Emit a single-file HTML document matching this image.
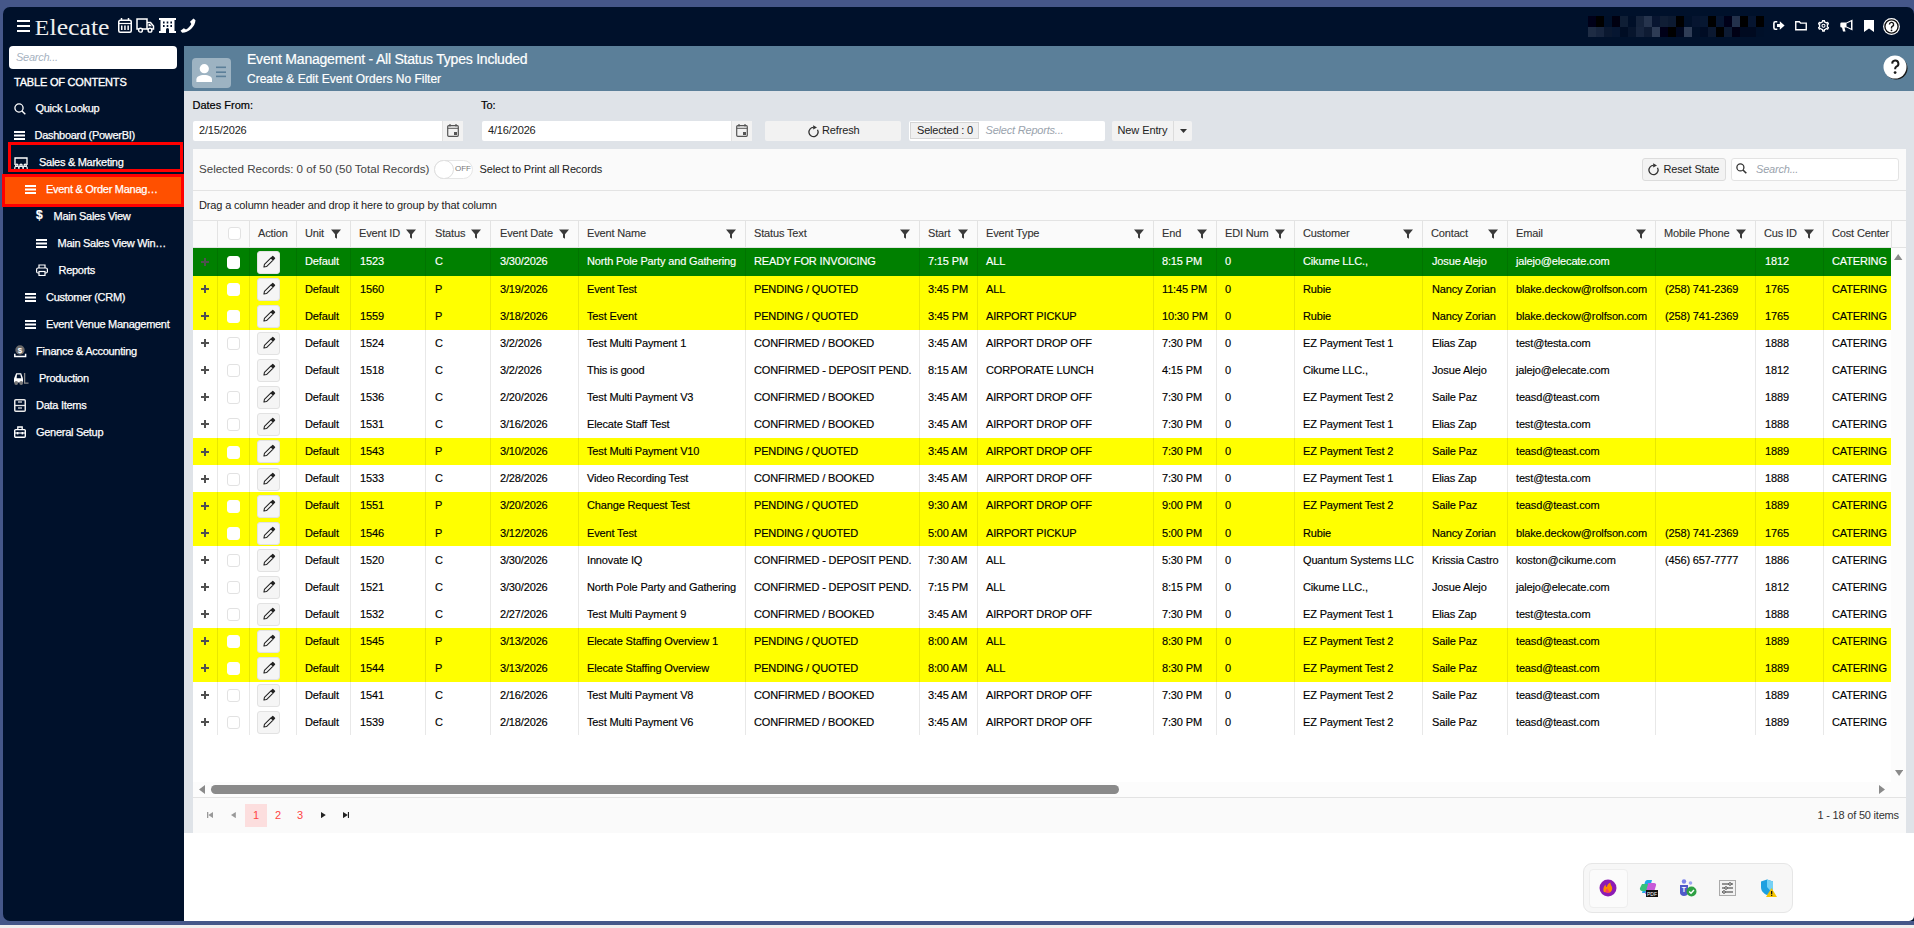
<!DOCTYPE html>
<html><head><meta charset="utf-8">
<style>
*{box-sizing:border-box;margin:0;padding:0}
html,body{width:1914px;height:928px;overflow:hidden;background:#efefef;font-family:"Liberation Sans",sans-serif;font-size:11px;color:#222}
.abs{position:absolute}
#frame{position:absolute;left:0;top:0;width:1914px;height:925px;background:#455789}
#navy{position:absolute;left:3px;top:7px;width:1911px;height:914px;background:#00112b;border-radius:7px 7px 0 7px}
#content{position:absolute;left:184px;top:46px;width:1730px;height:875px;background:#fff;border-bottom-right-radius:5px;overflow:hidden}
#band{position:absolute;left:0;top:0;width:1730px;height:45px;background:#5b7f99}
#gray{position:absolute;left:0;top:45px;width:1730px;height:742px;background:#dfe3e8}
.logo{position:absolute;left:35px;top:11px;font-family:"Liberation Serif",serif;font-size:26px;color:#f2f2f2;letter-spacing:-0.6px;line-height:30px}
.ham{position:absolute;left:16.5px;width:13.5px;height:2.3px;background:#fff}
.pix{position:absolute;left:1588px;top:16px;width:176px;height:21px}
.pix i{position:absolute;width:8px;height:10.5px;display:block}
.side-search{position:absolute;left:9px;top:46px;width:168px;height:23px;background:#fff;border-radius:4px}
.side-search span{position:absolute;left:7px;top:5px;font-style:italic;color:#a6b2bf;font-size:11px;letter-spacing:-0.25px}
.toc{position:absolute;left:14px;top:75px;color:#fff;font-size:11px;letter-spacing:-0.2px;line-height:14px;-webkit-text-stroke:0.35px #fff}
.nav{position:absolute;color:#fff;font-size:11px;letter-spacing:-0.28px;line-height:14px;white-space:nowrap;-webkit-text-stroke:0.25px #fff}
.nico{position:absolute}
.redbox{position:absolute;border:3px solid #f00}
.lbl{position:absolute;font-size:11px;color:#222;line-height:14px}
.inp{position:absolute;background:#fff;border-radius:2px;height:20px}
.inp .v{position:absolute;left:6px;top:2px;font-size:11px;color:#222;line-height:14px;letter-spacing:-0.15px}
.inp .cal{position:absolute;right:0;top:0;width:21px;height:20px;background:#f2f2f2;border-left:1px solid #e2e2e2}
.btn{position:absolute;background:#f2f2f2;border-radius:2px;height:20px}
#grid{position:absolute;left:193px;top:149px;width:1713px;height:684px;background:#fafafa;overflow:hidden}
.gtool-line{position:absolute;left:193px;width:1713px;height:1px;background:#e3e3e3}
.ghead{position:absolute;left:193px;width:1713px;height:26px;background:#fafafa}
.hc{position:absolute;top:0;height:26px;line-height:25px;padding-left:8px;color:#333;-webkit-text-stroke:0.12px #333;white-space:nowrap;overflow:hidden;letter-spacing:-0.15px}
.bl{border-left:1px solid rgba(0,0,0,0.09)}
.vl{position:absolute;top:248px;width:1px;height:488px;background:rgba(0,0,0,0.09)}
.hc .fi{position:absolute;right:9px;top:8px}
.row{position:absolute;left:193px;width:1698px;height:27px}
.rg{background:#008000;color:#fff}
.ry{background:#ffff00;color:#000}
.rw{background:#fff;color:#000}
.c{position:absolute;top:0;height:27px;line-height:29px;padding-left:9px;-webkit-text-stroke:0.15px currentColor;white-space:nowrap;overflow:hidden;letter-spacing:-0.15px}
.plus{position:absolute;left:8px;top:10px;width:8px;height:8px}
.plus:before{content:"";position:absolute;left:0;top:3px;width:8px;height:2px;background:#505050}
.plus:after{content:"";position:absolute;left:3px;top:0;width:2px;height:8px;background:#505050}
.cb{position:absolute;left:10px;top:7px;width:13px;height:13px;background:#fff;border:1px solid #e2e2e2;border-radius:3px}
.rg .cb,.ry .cb{border-color:#fff}
.hcb{top:6px}
.eb{position:absolute;left:8px;top:3px;width:23px;height:22.5px;background:#f5f5f5;border:1px solid #e2e2e2;border-radius:3px}
.eb svg{position:absolute;left:4px;top:3px}
</style></head>
<body>
<div id="frame"></div>
<div id="navy"></div>

<!-- top header -->
<div class="ham" style="top:20px"></div>
<div class="ham" style="top:25px"></div>
<div class="ham" style="top:29.5px"></div>
<svg class="abs" style="left:30px;top:12px" width="90" height="28" viewBox="0 0 90 28"><text x="4.8" y="22.6" font-family="Liberation Serif" font-size="21.5" fill="#eeeeee" textLength="14.5" lengthAdjust="spacingAndGlyphs">E</text><g transform="translate(0,22.6) scale(1,1.12) translate(0,-22.6)"><text x="19.5" y="22.6" font-family="Liberation Serif" font-size="21" fill="#eeeeee" textLength="60" lengthAdjust="spacingAndGlyphs">lecate</text></g></svg>
<!-- header icons -->
<svg class="abs" style="left:118px;top:18px" width="14" height="15" viewBox="0 0 14 15"><rect x="0.75" y="2.25" width="12.5" height="12" rx="1.5" fill="none" stroke="#fff" stroke-width="1.5"/><line x1="0.75" y1="5.5" x2="13.25" y2="5.5" stroke="#fff" stroke-width="1.2"/><line x1="3.5" y1="0" x2="3.5" y2="3" stroke="#fff" stroke-width="1.5"/><line x1="10.5" y1="0" x2="10.5" y2="3" stroke="#fff" stroke-width="1.5"/><g fill="#fff"><rect x="3" y="7.5" width="1.5" height="4.5"/><rect x="6.2" y="7.5" width="1.5" height="4.5"/><rect x="9.4" y="7.5" width="1.5" height="4.5"/></g></svg>
<svg class="abs" style="left:136px;top:18px" width="19" height="15" viewBox="0 0 19 15"><path d="M1 1H11V11H1Z" fill="none" stroke="#fff" stroke-width="1.5"/><path d="M11 4.5H14.5L17.5 8V11H11" fill="none" stroke="#fff" stroke-width="1.5"/><path d="M12.5 6H14L16 8.2H12.5Z" fill="#fff"/><circle cx="4.5" cy="12.2" r="1.9" fill="#00112b" stroke="#fff" stroke-width="1.4"/><circle cx="14" cy="12.2" r="1.9" fill="#00112b" stroke="#fff" stroke-width="1.4"/></svg>
<svg class="abs" style="left:159px;top:18px" width="17" height="15" viewBox="0 0 17 15"><path d="M0 0H17V2H15.5V13H17V15H10V11.5A1.5 1.5 0 0 0 7 11.5V15H0V13H1.5V2H0Z" fill="#fff"/><g fill="#00112b"><rect x="4" y="3.5" width="1.6" height="2"/><rect x="7.7" y="3.5" width="1.6" height="2"/><rect x="11.4" y="3.5" width="1.6" height="2"/><rect x="4" y="7" width="1.6" height="2"/><rect x="7.7" y="7" width="1.6" height="2"/><rect x="11.4" y="7" width="1.6" height="2"/></g></svg>
<svg class="abs" style="left:180px;top:18px" width="16" height="15" viewBox="0 0 16 15"><path d="M13.5 0.5L15.5 2.2C15.2 8.5 8.5 14.8 2.2 14.8L0.5 12.8L3.8 10.2L6 11.5C8.2 10.3 10.3 8.2 11.3 6L10 3.8Z" fill="#fff"/></svg>

<!-- pixelated user name -->
<div class="pix"><i style="left:0px;top:0;background:#000018"></i><i style="left:8px;top:0;background:#000000"></i><i style="left:16px;top:0;background:#001029"></i><i style="left:24px;top:0;background:#000010"></i><i style="left:32px;top:0;background:#0f1e35"></i><i style="left:40px;top:0;background:#000f28"></i><i style="left:48px;top:0;background:#15233b"></i><i style="left:56px;top:0;background:#26344d"></i><i style="left:64px;top:0;background:#081530"></i><i style="left:72px;top:0;background:#101e35"></i><i style="left:80px;top:0;background:#0c1a31"></i><i style="left:88px;top:0;background:#000000"></i><i style="left:96px;top:0;background:#001029"></i><i style="left:104px;top:0;background:#061530"></i><i style="left:112px;top:0;background:#071731"></i><i style="left:120px;top:0;background:#000000"></i><i style="left:128px;top:0;background:#061530"></i><i style="left:136px;top:0;background:#000018"></i><i style="left:144px;top:0;background:#23314b"></i><i style="left:152px;top:0;background:#000000"></i><i style="left:160px;top:0;background:#061530"></i><i style="left:168px;top:0;background:#000000"></i><i style="left:0px;top:10.5px;background:#1e2c44"></i><i style="left:8px;top:10.5px;background:#17253e"></i><i style="left:16px;top:10.5px;background:#0a1830"></i><i style="left:24px;top:10.5px;background:#061631"></i><i style="left:32px;top:10.5px;background:#000d24"></i><i style="left:40px;top:10.5px;background:#07152d"></i><i style="left:48px;top:10.5px;background:#17253e"></i><i style="left:56px;top:10.5px;background:#0e1b33"></i><i style="left:64px;top:10.5px;background:#2e3c55"></i><i style="left:72px;top:10.5px;background:#000018"></i><i style="left:80px;top:10.5px;background:#000000"></i><i style="left:88px;top:10.5px;background:#00081f"></i><i style="left:96px;top:10.5px;background:#2f3d56"></i><i style="left:104px;top:10.5px;background:#001029"></i><i style="left:112px;top:10.5px;background:#000c24"></i><i style="left:120px;top:10.5px;background:#0b1830"></i><i style="left:128px;top:10.5px;background:#000000"></i><i style="left:136px;top:10.5px;background:#0c1a32"></i><i style="left:144px;top:10.5px;background:#000014"></i><i style="left:152px;top:10.5px;background:#000a20"></i><i style="left:160px;top:10.5px;background:#000a20"></i><i style="left:168px;top:10.5px;background:#001029"></i></div>

<!-- right header icons -->
<svg class="abs" style="left:1772.5px;top:21px" width="12" height="9" viewBox="0 0 12 9"><path d="M4.3 0.8H2.3A1.4 1.4 0 0 0 0.9 2.2V6.8A1.4 1.4 0 0 0 2.3 8.2H4.3" fill="none" stroke="#fff" stroke-width="1.6"/><path d="M4 2.9H6.8V0.2L11.6 4.5L6.8 8.8V6.1H4Z" fill="#fff"/></svg>
<svg class="abs" style="left:1795px;top:21px" width="12" height="9.5" viewBox="0 0 12 9.5"><path d="M0.75 0.75H4.3L5.6 2.1H11.25V8.75H0.75Z" fill="none" stroke="#fff" stroke-width="1.4"/></svg>
<svg class="abs" style="left:1818px;top:20px" width="11" height="12" viewBox="0 0 11 12"><path d="M3.68 2.19L4.63 1.85L4.63 0.52L6.37 0.52L6.37 1.85L7.67 2.39L8.44 3.04L9.59 2.38L10.46 3.89L9.32 4.55L9.50 5.95L9.32 6.95L10.46 7.61L9.59 9.12L8.44 8.46L7.32 9.31L6.37 9.65L6.37 10.98L4.63 10.98L4.63 9.65L3.33 9.11L2.56 8.46L1.41 9.12L0.54 7.61L1.68 6.95L1.50 5.55L1.68 4.55L0.54 3.89L1.41 2.38L2.56 3.04Z" fill="none" stroke="#fff" stroke-width="1.3" stroke-linejoin="round"/><circle cx="5.5" cy="5.75" r="1.5" fill="none" stroke="#fff" stroke-width="1.1"/></svg>
<svg class="abs" style="left:1840px;top:19px" width="14" height="13" viewBox="0 0 14 13"><path d="M12.5 0.5V11.5L6.5 8.5H4.5L5.5 12.5H3L2 8.5H1.5A1.2 1.2 0 0 1 0.3 7.3V4.7A1.2 1.2 0 0 1 1.5 3.5H6.5Z" fill="#fff"/><path d="M6.5 4.5L11 2.5V9.5L6.5 7.5Z" fill="#00112b"/></svg>
<svg class="abs" style="left:1864px;top:20px" width="10" height="12" viewBox="0 0 10 12"><path d="M0 0H10V12L5 8.6L0 12Z" fill="#fff"/></svg>
<svg class="abs" style="left:1883px;top:17.5px" width="17" height="17" viewBox="0 0 17 17"><circle cx="8.5" cy="8.5" r="8.4" fill="#fff"/><circle cx="8.5" cy="8.5" r="6.6" fill="none" stroke="#111" stroke-width="1.4"/><path d="M6.4 6.5A2.1 2.1 0 1 1 9.3 8.4C8.8 8.7 8.5 9.1 8.5 9.8V10.4" fill="none" stroke="#111" stroke-width="1.4"/><circle cx="8.5" cy="12.3" r="0.9" fill="#111"/></svg>

<!-- sidebar -->
<div class="side-search"><span>Search...</span></div>
<div class="toc">TABLE OF CONTENTS</div>

<svg class="abs" style="left:14px;top:103px" width="12" height="12" viewBox="0 0 12 12"><circle cx="5" cy="5" r="4.1" fill="none" stroke="#fff" stroke-width="1.3"/><line x1="8" y1="8" x2="11.3" y2="11.3" stroke="#fff" stroke-width="1.4"/></svg>
<div class="nav" style="left:35.5px;top:101px">Quick Lookup</div>

<svg class="abs" style="left:14px;top:131px" width="11" height="9" viewBox="0 0 11 9"><rect y="0" width="11" height="2" fill="#fff"/><rect y="3.5" width="11" height="2" fill="#fff"/><rect y="7" width="11" height="2" fill="#fff"/></svg>
<div class="nav" style="left:34.5px;top:128px">Dashboard (PowerBI)</div>

<div class="redbox" style="left:8px;top:142px;width:175px;height:30px"></div>
<svg class="abs" style="left:14px;top:157px" width="14" height="12" viewBox="0 0 14 12"><path d="M1 8V1H13V8" fill="none" stroke="#fff" stroke-width="1.3"/><g fill="none" stroke="#fff" stroke-width="1.1"><circle cx="2.8" cy="8.3" r="1.2"/><circle cx="7" cy="8.3" r="1.2"/><circle cx="11.2" cy="8.3" r="1.2"/><path d="M0.8 12V11A2 2 0 0 1 4.8 11V12M5 12V11A2 2 0 0 1 9 11V12M9.2 12V11A2 2 0 0 1 13.2 11V12"/></g></svg>
<div class="nav" style="left:39px;top:155px">Sales &amp; Marketing</div>

<div class="redbox" style="left:2px;top:174px;width:182px;height:33px;background:#ff5000"></div>
<svg class="abs" style="left:25px;top:185px" width="11" height="9" viewBox="0 0 11 9"><rect y="0" width="11" height="2" fill="#fff"/><rect y="3.5" width="11" height="2" fill="#fff"/><rect y="7" width="11" height="2" fill="#fff"/></svg>
<div class="nav" style="left:46px;top:182px">Event &amp; Order Manag…</div>

<div class="nav" style="left:36px;top:208px;font-weight:bold;font-size:12px">$</div>
<div class="nav" style="left:53.5px;top:209px">Main Sales View</div>

<svg class="abs" style="left:36px;top:239px" width="11" height="9" viewBox="0 0 11 9"><rect y="0" width="11" height="2" fill="#fff"/><rect y="3.5" width="11" height="2" fill="#fff"/><rect y="7" width="11" height="2" fill="#fff"/></svg>
<div class="nav" style="left:57.5px;top:236px">Main Sales View Win…</div>

<svg class="abs" style="left:36px;top:264px" width="12" height="12" viewBox="0 0 12 12"><path d="M3 4V1H9V4" fill="none" stroke="#fff" stroke-width="1.2"/><rect x="0.6" y="4" width="10.8" height="5" rx="1.5" fill="none" stroke="#fff" stroke-width="1.2"/><rect x="3" y="7.5" width="6" height="4" fill="#00112b" stroke="#fff" stroke-width="1.2"/></svg>
<div class="nav" style="left:58.5px;top:263px">Reports</div>

<svg class="abs" style="left:25px;top:293px" width="11" height="9" viewBox="0 0 11 9"><rect y="0" width="11" height="2" fill="#fff"/><rect y="3.5" width="11" height="2" fill="#fff"/><rect y="7" width="11" height="2" fill="#fff"/></svg>
<div class="nav" style="left:46px;top:290px">Customer (CRM)</div>

<svg class="abs" style="left:25px;top:320px" width="11" height="9" viewBox="0 0 11 9"><rect y="0" width="11" height="2" fill="#fff"/><rect y="3.5" width="11" height="2" fill="#fff"/><rect y="7" width="11" height="2" fill="#fff"/></svg>
<div class="nav" style="left:46px;top:317px">Event Venue Management</div>

<svg class="abs" style="left:14px;top:345px" width="13" height="13" viewBox="0 0 13 13"><circle cx="6" cy="5" r="4.7" fill="#6a6a6a"/><text x="6" y="8" font-size="8" font-weight="bold" fill="#fff" text-anchor="middle" font-family="Liberation Sans">$</text><path d="M0.8 8.8V11.6H11.6V8.8" fill="none" stroke="#fff" stroke-width="1.5"/></svg>
<div class="nav" style="left:36px;top:344px">Finance &amp; Accounting</div>

<svg class="abs" style="left:13px;top:372px" width="16" height="13" viewBox="0 0 16 13"><path d="M1 6.5L3.2 1.2H8.2L10 6.5V10.5H1Z" fill="#fff"/><path d="M4 2.6H7.3L8.3 6.2H3.6Z" fill="#00112b"/><circle cx="3.2" cy="11" r="1.9" fill="#7a7a7a"/><circle cx="8.2" cy="11" r="1.9" fill="#7a7a7a"/><path d="M11.6 1V11.2H15.5" fill="none" stroke="#8a8a8a" stroke-width="1.3"/></svg>
<div class="nav" style="left:39px;top:371px">Production</div>

<svg class="abs" style="left:14px;top:399px" width="12" height="13" viewBox="0 0 12 13"><rect x="0.75" y="0.75" width="10.5" height="11.5" rx="1" fill="none" stroke="#e8e8e8" stroke-width="1.5"/><line x1="0.75" y1="6.5" x2="11.25" y2="6.5" stroke="#e8e8e8" stroke-width="1.3"/><line x1="4" y1="3" x2="8" y2="3" stroke="#e8e8e8" stroke-width="1.2"/><line x1="4" y1="9" x2="8" y2="9" stroke="#e8e8e8" stroke-width="1.2"/></svg>
<div class="nav" style="left:36px;top:398px">Data Items</div>

<svg class="abs" style="left:14px;top:426px" width="12" height="12" viewBox="0 0 12 12"><path d="M3.8 3.5V1H8.2V3.5" fill="none" stroke="#fff" stroke-width="1.3"/><rect x="0.7" y="3.6" width="10.6" height="7.6" rx="1" fill="none" stroke="#fff" stroke-width="1.4"/><line x1="0.7" y1="7" x2="11.3" y2="7" stroke="#fff" stroke-width="1.2"/><rect x="2.8" y="6" width="1.6" height="2.4" fill="#fff"/><rect x="7.6" y="6" width="1.6" height="2.4" fill="#fff"/></svg>
<div class="nav" style="left:36px;top:425px">General Setup</div>

<!-- content -->
<div id="content">
  <div id="band"></div>
  <div id="gray"></div>
</div>

<!-- band contents -->
<svg class="abs" style="left:192px;top:58px" width="39" height="30" viewBox="0 0 39 30"><rect x="0" y="0" width="39" height="30" rx="4" fill="#9db3c2"/><circle cx="12.3" cy="10.7" r="4.6" fill="#fff"/><path d="M4.4 24V21.6C4.4 18.6 7.6 17 12.2 17C16.8 17 20 18.6 20 21.6V24Z" fill="#fff"/><g stroke="#5b7f99" stroke-width="1.6"><line x1="24" y1="9.3" x2="34" y2="9.3"/><line x1="24" y1="14.2" x2="34" y2="14.2"/><line x1="24" y1="18.4" x2="34" y2="18.4"/></g></svg>
<div class="abs" style="left:247px;top:51px;font-size:14px;color:#fff;line-height:16px;letter-spacing:-0.22px;white-space:nowrap;-webkit-text-stroke:0.2px #fff">Event Management - All Status Types Included</div>
<div class="abs" style="left:247px;top:72px;font-size:12px;color:#fff;line-height:14px;white-space:nowrap;-webkit-text-stroke:0.2px #fff">Create &amp; Edit Event Orders No Filter</div>
<svg class="abs" style="left:1883px;top:55px;overflow:visible" width="24" height="24" viewBox="0 0 24 24"><circle cx="13.2" cy="13.2" r="11.3" fill="#1a1a1a"/><circle cx="12" cy="12" r="11.5" fill="#fff"/><path d="M9.2 8.6A3.1 3.1 0 1 1 13.4 11.6C12.6 12.1 12.2 12.6 12.2 13.5V14.2" fill="none" stroke="#1a1a1a" stroke-width="2"/><circle cx="12.1" cy="17.6" r="1.4" fill="#1a1a1a"/></svg>

<!-- toolbar -->
<div class="lbl" style="left:192.5px;top:98px;letter-spacing:0px;color:#000;-webkit-text-stroke:0.2px #000">Dates From:</div>
<div class="lbl" style="left:481px;top:98px;color:#000;-webkit-text-stroke:0.2px #000">To:</div>
<div class="inp" style="left:193px;top:121px;width:270px"><span class="v">2/15/2026</span><span class="cal"></span></div>
<div class="inp" style="left:482px;top:121px;width:270px"><span class="v">4/16/2026</span><span class="cal"></span></div>
<svg class="abs" style="left:447px;top:124px" width="12" height="13" viewBox="0 0 12 13"><rect x="0.7" y="1.7" width="10.6" height="10.6" rx="1" fill="none" stroke="#555" stroke-width="1.2"/><line x1="0.7" y1="4.3" x2="11.3" y2="4.3" stroke="#555" stroke-width="1"/><line x1="3" y1="0" x2="3" y2="2.5" stroke="#555" stroke-width="1.2"/><line x1="9" y1="0" x2="9" y2="2.5" stroke="#555" stroke-width="1.2"/><rect x="7" y="8" width="3" height="3" fill="#555"/></svg>
<svg class="abs" style="left:736px;top:124px" width="12" height="13" viewBox="0 0 12 13"><rect x="0.7" y="1.7" width="10.6" height="10.6" rx="1" fill="none" stroke="#555" stroke-width="1.2"/><line x1="0.7" y1="4.3" x2="11.3" y2="4.3" stroke="#555" stroke-width="1"/><line x1="3" y1="0" x2="3" y2="2.5" stroke="#555" stroke-width="1.2"/><line x1="9" y1="0" x2="9" y2="2.5" stroke="#555" stroke-width="1.2"/><rect x="7" y="8" width="3" height="3" fill="#555"/></svg>

<div class="btn" style="left:765px;top:121px;width:136px"></div>
<svg class="abs" style="left:806.5px;top:124.5px;overflow:visible" width="13" height="13" viewBox="0 0 13 13"><path d="M6.5 2.4A4.6 4.6 0 1 0 10.5 4.7" fill="none" stroke="#333" stroke-width="1.3"/><path d="M6.2 0.2L10 2.4L6.2 4.6Z" fill="#333"/></svg>
<div class="lbl" style="left:822px;top:123px;color:#222;letter-spacing:-0.15px">Refresh</div>

<div class="abs" style="left:909px;top:121px;width:196px;height:20px;background:#fff;border-radius:2px"></div>
<div class="abs" style="left:910px;top:122px;width:69px;height:17px;background:#f0f0f0;border:1px solid #d5d5d5"></div>
<div class="lbl" style="left:917px;top:123px;letter-spacing:-0.18px">Selected : 0</div>
<div class="lbl" style="left:985.5px;top:123px;color:#9aa3ad;font-style:italic;letter-spacing:-0.2px">Select Reports...</div>

<div class="btn" style="left:1112px;top:121px;width:80px"></div>
<div class="abs" style="left:1173px;top:121px;width:1px;height:20px;background:#dcdcdc"></div>
<div class="lbl" style="left:1117.5px;top:123px;letter-spacing:-0.1px">New Entry</div>
<svg class="abs" style="left:1179.5px;top:128.5px" width="7" height="4" viewBox="0 0 7 4"><path d="M0 0H7L3.5 4Z" fill="#333"/></svg>

<!-- grid -->
<div id="grid"></div>
<div class="abs" style="left:193px;top:248px;width:1698px;height:534px;background:#fff"></div>
<div class="gtool-line" style="top:190px"></div>
<div class="gtool-line" style="top:220px"></div>
<div class="gtool-line" style="top:247px"></div>
<div class="gtool-line" style="top:797px"></div>

<div class="abs" style="left:199px;top:162px;font-size:11.6px;color:#444;line-height:14px;white-space:nowrap;letter-spacing:-0.02px">Selected Records: 0 of 50 (50 Total Records)</div>
<div class="abs" style="left:434px;top:160px;width:39px;height:19px;border-radius:10px;background:#fff;border:1px solid #e6e6e6"></div>
<div class="abs" style="left:434px;top:159.5px;width:19.5px;height:19.5px;border-radius:50%;background:#fff;border:1px solid #dedede"></div>
<div class="abs" style="left:455px;top:164px;font-size:8px;color:#777;line-height:10px">OFF</div>
<div class="lbl" style="left:479.5px;top:162px;color:#222;letter-spacing:-0.15px">Select to Print all Records</div>

<div class="abs" style="left:1642px;top:158px;width:83.5px;height:23px;background:#f3f3f3;border:1px solid #dcdcdc;border-radius:3px"></div>
<svg class="abs" style="left:1647.4px;top:162.6px;overflow:visible" width="13" height="13" viewBox="0 0 13 13"><path d="M6.5 2.4A4.6 4.6 0 1 0 10.5 4.7" fill="none" stroke="#333" stroke-width="1.3"/><path d="M6.2 0.2L10 2.4L6.2 4.6Z" fill="#333"/></svg>
<div class="lbl" style="left:1663.5px;top:162px;color:#222;letter-spacing:-0.15px">Reset State</div>
<div class="abs" style="left:1731px;top:158px;width:168px;height:23px;background:#fff;border:1px solid #e3e3e3;border-radius:3px"></div>
<svg class="abs" style="left:1735.5px;top:163px" width="11" height="11" viewBox="0 0 11 11"><circle cx="4.4" cy="4.4" r="3.5" fill="none" stroke="#333" stroke-width="1.3"/><line x1="7" y1="7" x2="10.3" y2="10.3" stroke="#333" stroke-width="1.6"/></svg>
<div class="lbl" style="left:1756px;top:162px;color:#9aa3ad;font-style:italic;letter-spacing:-0.2px">Search...</div>

<div class="lbl" style="left:199px;top:198px;color:#222;letter-spacing:-0.15px">Drag a column header and drop it here to group by that column</div>

<div class="ghead" style="top:221px">
<div class="hc" style="left:0px;width:24px"></div>
<div class="hc bl" style="left:24px;width:32px"><span class="cb hcb"></span></div>
<div class="hc bl" style="left:56px;width:47px"><span class="ht">Action</span></div>
<div class="hc bl" style="left:103px;width:54px"><span class="ht">Unit</span><svg class="fi" width="10" height="10" viewBox="0 0 10 10"><path d="M0 0.5H10L6 5.2V9.8L4 8.6V5.2Z" fill="#3a3a3a"/></svg></div>
<div class="hc bl" style="left:157px;width:75px"><span class="ht">Event ID</span><svg class="fi" width="10" height="10" viewBox="0 0 10 10"><path d="M0 0.5H10L6 5.2V9.8L4 8.6V5.2Z" fill="#3a3a3a"/></svg></div>
<div class="hc bl" style="left:232px;width:65px;padding-left:9px"><span class="ht">Status</span><svg class="fi" width="10" height="10" viewBox="0 0 10 10"><path d="M0 0.5H10L6 5.2V9.8L4 8.6V5.2Z" fill="#3a3a3a"/></svg></div>
<div class="hc bl" style="left:297px;width:88px;padding-left:9px"><span class="ht">Event Date</span><svg class="fi" width="10" height="10" viewBox="0 0 10 10"><path d="M0 0.5H10L6 5.2V9.8L4 8.6V5.2Z" fill="#3a3a3a"/></svg></div>
<div class="hc bl" style="left:385px;width:167px"><span class="ht">Event Name</span><svg class="fi" width="10" height="10" viewBox="0 0 10 10"><path d="M0 0.5H10L6 5.2V9.8L4 8.6V5.2Z" fill="#3a3a3a"/></svg></div>
<div class="hc bl" style="left:552px;width:174px"><span class="ht">Status Text</span><svg class="fi" width="10" height="10" viewBox="0 0 10 10"><path d="M0 0.5H10L6 5.2V9.8L4 8.6V5.2Z" fill="#3a3a3a"/></svg></div>
<div class="hc bl" style="left:726px;width:58px"><span class="ht">Start</span><svg class="fi" width="10" height="10" viewBox="0 0 10 10"><path d="M0 0.5H10L6 5.2V9.8L4 8.6V5.2Z" fill="#3a3a3a"/></svg></div>
<div class="hc bl" style="left:784px;width:176px"><span class="ht">Event Type</span><svg class="fi" width="10" height="10" viewBox="0 0 10 10"><path d="M0 0.5H10L6 5.2V9.8L4 8.6V5.2Z" fill="#3a3a3a"/></svg></div>
<div class="hc bl" style="left:960px;width:63px"><span class="ht">End</span><svg class="fi" width="10" height="10" viewBox="0 0 10 10"><path d="M0 0.5H10L6 5.2V9.8L4 8.6V5.2Z" fill="#3a3a3a"/></svg></div>
<div class="hc bl" style="left:1023px;width:78px"><span class="ht">EDI Num</span><svg class="fi" width="10" height="10" viewBox="0 0 10 10"><path d="M0 0.5H10L6 5.2V9.8L4 8.6V5.2Z" fill="#3a3a3a"/></svg></div>
<div class="hc bl" style="left:1101px;width:128px"><span class="ht">Customer</span><svg class="fi" width="10" height="10" viewBox="0 0 10 10"><path d="M0 0.5H10L6 5.2V9.8L4 8.6V5.2Z" fill="#3a3a3a"/></svg></div>
<div class="hc bl" style="left:1229px;width:85px"><span class="ht">Contact</span><svg class="fi" width="10" height="10" viewBox="0 0 10 10"><path d="M0 0.5H10L6 5.2V9.8L4 8.6V5.2Z" fill="#3a3a3a"/></svg></div>
<div class="hc bl" style="left:1314px;width:148px"><span class="ht">Email</span><svg class="fi" width="10" height="10" viewBox="0 0 10 10"><path d="M0 0.5H10L6 5.2V9.8L4 8.6V5.2Z" fill="#3a3a3a"/></svg></div>
<div class="hc bl" style="left:1462px;width:100px"><span class="ht">Mobile Phone</span><svg class="fi" width="10" height="10" viewBox="0 0 10 10"><path d="M0 0.5H10L6 5.2V9.8L4 8.6V5.2Z" fill="#3a3a3a"/></svg></div>
<div class="hc bl" style="left:1562px;width:68px"><span class="ht">Cus ID</span><svg class="fi" width="10" height="10" viewBox="0 0 10 10"><path d="M0 0.5H10L6 5.2V9.8L4 8.6V5.2Z" fill="#3a3a3a"/></svg></div>
<div class="hc bl" style="left:1630px;width:68px"><span class="ht">Cost Center</span></div>
<div class="hc bl" style="left:1698px;width:15px"></div>
</div>
<div class="row rg" style="top:248px;height:28px">
<div class="c" style="left:0px;width:24px"><span class="plus" style="top:10px"></span></div>
<div class="c" style="left:24px;width:32px"><span class="cb" style="top:8px"></span></div>
<div class="c" style="left:56px;width:47px"><span class="eb" style="top:3px"><svg width="14" height="14" viewBox="0 0 14 14"><g transform="translate(7,7) rotate(-45)"><path d="M-7.2 0L-5 -1.5H4.3V1.5H-5Z" fill="none" stroke="#222" stroke-width="1.05" stroke-linejoin="round"/><rect x="4.3" y="-1.9" width="2.9" height="3.8" rx="0.6" fill="#222"/></g></svg></span></div>
<div class="c" style="left:103px;width:54px;top:-1px">Default</div>
<div class="c" style="left:157px;width:75px;top:-1px;padding-left:10px">1523</div>
<div class="c" style="left:232px;width:65px;top:-1px;padding-left:10px">C</div>
<div class="c" style="left:297px;width:88px;top:-1px;padding-left:10px">3/30/2026</div>
<div class="c" style="left:385px;width:167px;top:-1px">North Pole Party and Gathering</div>
<div class="c" style="left:552px;width:174px;top:-1px">READY FOR INVOICING</div>
<div class="c" style="left:726px;width:58px;top:-1px">7:15 PM</div>
<div class="c" style="left:784px;width:176px;top:-1px">ALL</div>
<div class="c" style="left:960px;width:63px;top:-1px">8:15 PM</div>
<div class="c" style="left:1023px;width:78px;top:-1px">0</div>
<div class="c" style="left:1101px;width:128px;top:-1px">Cikume LLC.,</div>
<div class="c" style="left:1229px;width:85px;top:-1px;padding-left:10px">Josue Alejo</div>
<div class="c" style="left:1314px;width:148px;top:-1px">jalejo@elecate.com</div>
<div class="c" style="left:1462px;width:100px;top:-1px;padding-left:10px"></div>
<div class="c" style="left:1562px;width:68px;top:-1px;padding-left:10px">1812</div>
<div class="c" style="left:1630px;width:68px;top:-1px">CATERING</div>
</div>
<div class="row ry" style="top:276px;height:27px">
<div class="c" style="left:0px;width:24px"><span class="plus" style="top:9px"></span></div>
<div class="c" style="left:24px;width:32px"><span class="cb" style="top:7px"></span></div>
<div class="c" style="left:56px;width:47px"><span class="eb" style="top:2px"><svg width="14" height="14" viewBox="0 0 14 14"><g transform="translate(7,7) rotate(-45)"><path d="M-7.2 0L-5 -1.5H4.3V1.5H-5Z" fill="none" stroke="#222" stroke-width="1.05" stroke-linejoin="round"/><rect x="4.3" y="-1.9" width="2.9" height="3.8" rx="0.6" fill="#222"/></g></svg></span></div>
<div class="c" style="left:103px;width:54px;top:-1px">Default</div>
<div class="c" style="left:157px;width:75px;top:-1px;padding-left:10px">1560</div>
<div class="c" style="left:232px;width:65px;top:-1px;padding-left:10px">P</div>
<div class="c" style="left:297px;width:88px;top:-1px;padding-left:10px">3/19/2026</div>
<div class="c" style="left:385px;width:167px;top:-1px">Event Test</div>
<div class="c" style="left:552px;width:174px;top:-1px">PENDING / QUOTED</div>
<div class="c" style="left:726px;width:58px;top:-1px">3:45 PM</div>
<div class="c" style="left:784px;width:176px;top:-1px">ALL</div>
<div class="c" style="left:960px;width:63px;top:-1px">11:45 PM</div>
<div class="c" style="left:1023px;width:78px;top:-1px">0</div>
<div class="c" style="left:1101px;width:128px;top:-1px">Rubie</div>
<div class="c" style="left:1229px;width:85px;top:-1px;padding-left:10px">Nancy Zorian</div>
<div class="c" style="left:1314px;width:148px;top:-1px">blake.deckow@rolfson.com</div>
<div class="c" style="left:1462px;width:100px;top:-1px;padding-left:10px">(258) 741-2369</div>
<div class="c" style="left:1562px;width:68px;top:-1px;padding-left:10px">1765</div>
<div class="c" style="left:1630px;width:68px;top:-1px">CATERING</div>
</div>
<div class="row ry" style="top:303px;height:27px">
<div class="c" style="left:0px;width:24px"><span class="plus" style="top:9px"></span></div>
<div class="c" style="left:24px;width:32px"><span class="cb" style="top:7px"></span></div>
<div class="c" style="left:56px;width:47px"><span class="eb" style="top:2px"><svg width="14" height="14" viewBox="0 0 14 14"><g transform="translate(7,7) rotate(-45)"><path d="M-7.2 0L-5 -1.5H4.3V1.5H-5Z" fill="none" stroke="#222" stroke-width="1.05" stroke-linejoin="round"/><rect x="4.3" y="-1.9" width="2.9" height="3.8" rx="0.6" fill="#222"/></g></svg></span></div>
<div class="c" style="left:103px;width:54px;top:-1px">Default</div>
<div class="c" style="left:157px;width:75px;top:-1px;padding-left:10px">1559</div>
<div class="c" style="left:232px;width:65px;top:-1px;padding-left:10px">P</div>
<div class="c" style="left:297px;width:88px;top:-1px;padding-left:10px">3/18/2026</div>
<div class="c" style="left:385px;width:167px;top:-1px">Test Event</div>
<div class="c" style="left:552px;width:174px;top:-1px">PENDING / QUOTED</div>
<div class="c" style="left:726px;width:58px;top:-1px">3:45 PM</div>
<div class="c" style="left:784px;width:176px;top:-1px">AIRPORT PICKUP</div>
<div class="c" style="left:960px;width:63px;top:-1px">10:30 PM</div>
<div class="c" style="left:1023px;width:78px;top:-1px">0</div>
<div class="c" style="left:1101px;width:128px;top:-1px">Rubie</div>
<div class="c" style="left:1229px;width:85px;top:-1px;padding-left:10px">Nancy Zorian</div>
<div class="c" style="left:1314px;width:148px;top:-1px">blake.deckow@rolfson.com</div>
<div class="c" style="left:1462px;width:100px;top:-1px;padding-left:10px">(258) 741-2369</div>
<div class="c" style="left:1562px;width:68px;top:-1px;padding-left:10px">1765</div>
<div class="c" style="left:1630px;width:68px;top:-1px">CATERING</div>
</div>
<div class="row rw" style="top:330px;height:27px">
<div class="c" style="left:0px;width:24px"><span class="plus" style="top:9px"></span></div>
<div class="c" style="left:24px;width:32px"><span class="cb" style="top:7px"></span></div>
<div class="c" style="left:56px;width:47px"><span class="eb" style="top:2px"><svg width="14" height="14" viewBox="0 0 14 14"><g transform="translate(7,7) rotate(-45)"><path d="M-7.2 0L-5 -1.5H4.3V1.5H-5Z" fill="none" stroke="#222" stroke-width="1.05" stroke-linejoin="round"/><rect x="4.3" y="-1.9" width="2.9" height="3.8" rx="0.6" fill="#222"/></g></svg></span></div>
<div class="c" style="left:103px;width:54px;top:-1px">Default</div>
<div class="c" style="left:157px;width:75px;top:-1px;padding-left:10px">1524</div>
<div class="c" style="left:232px;width:65px;top:-1px;padding-left:10px">C</div>
<div class="c" style="left:297px;width:88px;top:-1px;padding-left:10px">3/2/2026</div>
<div class="c" style="left:385px;width:167px;top:-1px">Test Multi Payment 1</div>
<div class="c" style="left:552px;width:174px;top:-1px">CONFIRMED / BOOKED</div>
<div class="c" style="left:726px;width:58px;top:-1px">3:45 AM</div>
<div class="c" style="left:784px;width:176px;top:-1px">AIRPORT DROP OFF</div>
<div class="c" style="left:960px;width:63px;top:-1px">7:30 PM</div>
<div class="c" style="left:1023px;width:78px;top:-1px">0</div>
<div class="c" style="left:1101px;width:128px;top:-1px">EZ Payment Test 1</div>
<div class="c" style="left:1229px;width:85px;top:-1px;padding-left:10px">Elias Zap</div>
<div class="c" style="left:1314px;width:148px;top:-1px">test@testa.com</div>
<div class="c" style="left:1462px;width:100px;top:-1px;padding-left:10px"></div>
<div class="c" style="left:1562px;width:68px;top:-1px;padding-left:10px">1888</div>
<div class="c" style="left:1630px;width:68px;top:-1px">CATERING</div>
</div>
<div class="row rw" style="top:357px;height:27px">
<div class="c" style="left:0px;width:24px"><span class="plus" style="top:9px"></span></div>
<div class="c" style="left:24px;width:32px"><span class="cb" style="top:7px"></span></div>
<div class="c" style="left:56px;width:47px"><span class="eb" style="top:2px"><svg width="14" height="14" viewBox="0 0 14 14"><g transform="translate(7,7) rotate(-45)"><path d="M-7.2 0L-5 -1.5H4.3V1.5H-5Z" fill="none" stroke="#222" stroke-width="1.05" stroke-linejoin="round"/><rect x="4.3" y="-1.9" width="2.9" height="3.8" rx="0.6" fill="#222"/></g></svg></span></div>
<div class="c" style="left:103px;width:54px;top:-1px">Default</div>
<div class="c" style="left:157px;width:75px;top:-1px;padding-left:10px">1518</div>
<div class="c" style="left:232px;width:65px;top:-1px;padding-left:10px">C</div>
<div class="c" style="left:297px;width:88px;top:-1px;padding-left:10px">3/2/2026</div>
<div class="c" style="left:385px;width:167px;top:-1px">This is good</div>
<div class="c" style="left:552px;width:174px;top:-1px">CONFIRMED - DEPOSIT PEND.</div>
<div class="c" style="left:726px;width:58px;top:-1px">8:15 AM</div>
<div class="c" style="left:784px;width:176px;top:-1px">CORPORATE LUNCH</div>
<div class="c" style="left:960px;width:63px;top:-1px">4:15 PM</div>
<div class="c" style="left:1023px;width:78px;top:-1px">0</div>
<div class="c" style="left:1101px;width:128px;top:-1px">Cikume LLC.,</div>
<div class="c" style="left:1229px;width:85px;top:-1px;padding-left:10px">Josue Alejo</div>
<div class="c" style="left:1314px;width:148px;top:-1px">jalejo@elecate.com</div>
<div class="c" style="left:1462px;width:100px;top:-1px;padding-left:10px"></div>
<div class="c" style="left:1562px;width:68px;top:-1px;padding-left:10px">1812</div>
<div class="c" style="left:1630px;width:68px;top:-1px">CATERING</div>
</div>
<div class="row rw" style="top:384px;height:27px">
<div class="c" style="left:0px;width:24px"><span class="plus" style="top:9px"></span></div>
<div class="c" style="left:24px;width:32px"><span class="cb" style="top:7px"></span></div>
<div class="c" style="left:56px;width:47px"><span class="eb" style="top:2px"><svg width="14" height="14" viewBox="0 0 14 14"><g transform="translate(7,7) rotate(-45)"><path d="M-7.2 0L-5 -1.5H4.3V1.5H-5Z" fill="none" stroke="#222" stroke-width="1.05" stroke-linejoin="round"/><rect x="4.3" y="-1.9" width="2.9" height="3.8" rx="0.6" fill="#222"/></g></svg></span></div>
<div class="c" style="left:103px;width:54px;top:-1px">Default</div>
<div class="c" style="left:157px;width:75px;top:-1px;padding-left:10px">1536</div>
<div class="c" style="left:232px;width:65px;top:-1px;padding-left:10px">C</div>
<div class="c" style="left:297px;width:88px;top:-1px;padding-left:10px">2/20/2026</div>
<div class="c" style="left:385px;width:167px;top:-1px">Test Multi Payment V3</div>
<div class="c" style="left:552px;width:174px;top:-1px">CONFIRMED / BOOKED</div>
<div class="c" style="left:726px;width:58px;top:-1px">3:45 AM</div>
<div class="c" style="left:784px;width:176px;top:-1px">AIRPORT DROP OFF</div>
<div class="c" style="left:960px;width:63px;top:-1px">7:30 PM</div>
<div class="c" style="left:1023px;width:78px;top:-1px">0</div>
<div class="c" style="left:1101px;width:128px;top:-1px">EZ Payment Test 2</div>
<div class="c" style="left:1229px;width:85px;top:-1px;padding-left:10px">Saile Paz</div>
<div class="c" style="left:1314px;width:148px;top:-1px">teasd@teast.com</div>
<div class="c" style="left:1462px;width:100px;top:-1px;padding-left:10px"></div>
<div class="c" style="left:1562px;width:68px;top:-1px;padding-left:10px">1889</div>
<div class="c" style="left:1630px;width:68px;top:-1px">CATERING</div>
</div>
<div class="row rw" style="top:411px;height:27px">
<div class="c" style="left:0px;width:24px"><span class="plus" style="top:9px"></span></div>
<div class="c" style="left:24px;width:32px"><span class="cb" style="top:7px"></span></div>
<div class="c" style="left:56px;width:47px"><span class="eb" style="top:2px"><svg width="14" height="14" viewBox="0 0 14 14"><g transform="translate(7,7) rotate(-45)"><path d="M-7.2 0L-5 -1.5H4.3V1.5H-5Z" fill="none" stroke="#222" stroke-width="1.05" stroke-linejoin="round"/><rect x="4.3" y="-1.9" width="2.9" height="3.8" rx="0.6" fill="#222"/></g></svg></span></div>
<div class="c" style="left:103px;width:54px;top:-1px">Default</div>
<div class="c" style="left:157px;width:75px;top:-1px;padding-left:10px">1531</div>
<div class="c" style="left:232px;width:65px;top:-1px;padding-left:10px">C</div>
<div class="c" style="left:297px;width:88px;top:-1px;padding-left:10px">3/16/2026</div>
<div class="c" style="left:385px;width:167px;top:-1px">Elecate Staff Test</div>
<div class="c" style="left:552px;width:174px;top:-1px">CONFIRMED / BOOKED</div>
<div class="c" style="left:726px;width:58px;top:-1px">3:45 AM</div>
<div class="c" style="left:784px;width:176px;top:-1px">AIRPORT DROP OFF</div>
<div class="c" style="left:960px;width:63px;top:-1px">7:30 PM</div>
<div class="c" style="left:1023px;width:78px;top:-1px">0</div>
<div class="c" style="left:1101px;width:128px;top:-1px">EZ Payment Test 1</div>
<div class="c" style="left:1229px;width:85px;top:-1px;padding-left:10px">Elias Zap</div>
<div class="c" style="left:1314px;width:148px;top:-1px">test@testa.com</div>
<div class="c" style="left:1462px;width:100px;top:-1px;padding-left:10px"></div>
<div class="c" style="left:1562px;width:68px;top:-1px;padding-left:10px">1888</div>
<div class="c" style="left:1630px;width:68px;top:-1px">CATERING</div>
</div>
<div class="row ry" style="top:438px;height:27px">
<div class="c" style="left:0px;width:24px"><span class="plus" style="top:10px"></span></div>
<div class="c" style="left:24px;width:32px"><span class="cb" style="top:8px"></span></div>
<div class="c" style="left:56px;width:47px"><span class="eb" style="top:2px"><svg width="14" height="14" viewBox="0 0 14 14"><g transform="translate(7,7) rotate(-45)"><path d="M-7.2 0L-5 -1.5H4.3V1.5H-5Z" fill="none" stroke="#222" stroke-width="1.05" stroke-linejoin="round"/><rect x="4.3" y="-1.9" width="2.9" height="3.8" rx="0.6" fill="#222"/></g></svg></span></div>
<div class="c" style="left:103px;width:54px;top:-1px">Default</div>
<div class="c" style="left:157px;width:75px;top:-1px;padding-left:10px">1543</div>
<div class="c" style="left:232px;width:65px;top:-1px;padding-left:10px">P</div>
<div class="c" style="left:297px;width:88px;top:-1px;padding-left:10px">3/10/2026</div>
<div class="c" style="left:385px;width:167px;top:-1px">Test Multi Payment V10</div>
<div class="c" style="left:552px;width:174px;top:-1px">PENDING / QUOTED</div>
<div class="c" style="left:726px;width:58px;top:-1px">3:45 AM</div>
<div class="c" style="left:784px;width:176px;top:-1px">AIRPORT DROP OFF</div>
<div class="c" style="left:960px;width:63px;top:-1px">7:30 PM</div>
<div class="c" style="left:1023px;width:78px;top:-1px">0</div>
<div class="c" style="left:1101px;width:128px;top:-1px">EZ Payment Test 2</div>
<div class="c" style="left:1229px;width:85px;top:-1px;padding-left:10px">Saile Paz</div>
<div class="c" style="left:1314px;width:148px;top:-1px">teasd@teast.com</div>
<div class="c" style="left:1462px;width:100px;top:-1px;padding-left:10px"></div>
<div class="c" style="left:1562px;width:68px;top:-1px;padding-left:10px">1889</div>
<div class="c" style="left:1630px;width:68px;top:-1px">CATERING</div>
</div>
<div class="row rw" style="top:465px;height:27px">
<div class="c" style="left:0px;width:24px"><span class="plus" style="top:10px"></span></div>
<div class="c" style="left:24px;width:32px"><span class="cb" style="top:8px"></span></div>
<div class="c" style="left:56px;width:47px"><span class="eb" style="top:3px"><svg width="14" height="14" viewBox="0 0 14 14"><g transform="translate(7,7) rotate(-45)"><path d="M-7.2 0L-5 -1.5H4.3V1.5H-5Z" fill="none" stroke="#222" stroke-width="1.05" stroke-linejoin="round"/><rect x="4.3" y="-1.9" width="2.9" height="3.8" rx="0.6" fill="#222"/></g></svg></span></div>
<div class="c" style="left:103px;width:54px;top:-1px">Default</div>
<div class="c" style="left:157px;width:75px;top:-1px;padding-left:10px">1533</div>
<div class="c" style="left:232px;width:65px;top:-1px;padding-left:10px">C</div>
<div class="c" style="left:297px;width:88px;top:-1px;padding-left:10px">2/28/2026</div>
<div class="c" style="left:385px;width:167px;top:-1px">Video Recording Test</div>
<div class="c" style="left:552px;width:174px;top:-1px">CONFIRMED / BOOKED</div>
<div class="c" style="left:726px;width:58px;top:-1px">3:45 AM</div>
<div class="c" style="left:784px;width:176px;top:-1px">AIRPORT DROP OFF</div>
<div class="c" style="left:960px;width:63px;top:-1px">7:30 PM</div>
<div class="c" style="left:1023px;width:78px;top:-1px">0</div>
<div class="c" style="left:1101px;width:128px;top:-1px">EZ Payment Test 1</div>
<div class="c" style="left:1229px;width:85px;top:-1px;padding-left:10px">Elias Zap</div>
<div class="c" style="left:1314px;width:148px;top:-1px">test@testa.com</div>
<div class="c" style="left:1462px;width:100px;top:-1px;padding-left:10px"></div>
<div class="c" style="left:1562px;width:68px;top:-1px;padding-left:10px">1888</div>
<div class="c" style="left:1630px;width:68px;top:-1px">CATERING</div>
</div>
<div class="row ry" style="top:492px;height:27px">
<div class="c" style="left:0px;width:24px"><span class="plus" style="top:10px"></span></div>
<div class="c" style="left:24px;width:32px"><span class="cb" style="top:8px"></span></div>
<div class="c" style="left:56px;width:47px"><span class="eb" style="top:3px"><svg width="14" height="14" viewBox="0 0 14 14"><g transform="translate(7,7) rotate(-45)"><path d="M-7.2 0L-5 -1.5H4.3V1.5H-5Z" fill="none" stroke="#222" stroke-width="1.05" stroke-linejoin="round"/><rect x="4.3" y="-1.9" width="2.9" height="3.8" rx="0.6" fill="#222"/></g></svg></span></div>
<div class="c" style="left:103px;width:54px;top:-1px">Default</div>
<div class="c" style="left:157px;width:75px;top:-1px;padding-left:10px">1551</div>
<div class="c" style="left:232px;width:65px;top:-1px;padding-left:10px">P</div>
<div class="c" style="left:297px;width:88px;top:-1px;padding-left:10px">3/20/2026</div>
<div class="c" style="left:385px;width:167px;top:-1px">Change Request Test</div>
<div class="c" style="left:552px;width:174px;top:-1px">PENDING / QUOTED</div>
<div class="c" style="left:726px;width:58px;top:-1px">9:30 AM</div>
<div class="c" style="left:784px;width:176px;top:-1px">AIRPORT DROP OFF</div>
<div class="c" style="left:960px;width:63px;top:-1px">9:00 PM</div>
<div class="c" style="left:1023px;width:78px;top:-1px">0</div>
<div class="c" style="left:1101px;width:128px;top:-1px">EZ Payment Test 2</div>
<div class="c" style="left:1229px;width:85px;top:-1px;padding-left:10px">Saile Paz</div>
<div class="c" style="left:1314px;width:148px;top:-1px">teasd@teast.com</div>
<div class="c" style="left:1462px;width:100px;top:-1px;padding-left:10px"></div>
<div class="c" style="left:1562px;width:68px;top:-1px;padding-left:10px">1889</div>
<div class="c" style="left:1630px;width:68px;top:-1px">CATERING</div>
</div>
<div class="row ry" style="top:519px;height:27px">
<div class="c" style="left:0px;width:24px"><span class="plus" style="top:10px"></span></div>
<div class="c" style="left:24px;width:32px"><span class="cb" style="top:8px"></span></div>
<div class="c" style="left:56px;width:47px"><span class="eb" style="top:3px"><svg width="14" height="14" viewBox="0 0 14 14"><g transform="translate(7,7) rotate(-45)"><path d="M-7.2 0L-5 -1.5H4.3V1.5H-5Z" fill="none" stroke="#222" stroke-width="1.05" stroke-linejoin="round"/><rect x="4.3" y="-1.9" width="2.9" height="3.8" rx="0.6" fill="#222"/></g></svg></span></div>
<div class="c" style="left:103px;width:54px">Default</div>
<div class="c" style="left:157px;width:75px;padding-left:10px">1546</div>
<div class="c" style="left:232px;width:65px;padding-left:10px">P</div>
<div class="c" style="left:297px;width:88px;padding-left:10px">3/12/2026</div>
<div class="c" style="left:385px;width:167px">Event Test</div>
<div class="c" style="left:552px;width:174px">PENDING / QUOTED</div>
<div class="c" style="left:726px;width:58px">5:00 AM</div>
<div class="c" style="left:784px;width:176px">AIRPORT PICKUP</div>
<div class="c" style="left:960px;width:63px">5:00 PM</div>
<div class="c" style="left:1023px;width:78px">0</div>
<div class="c" style="left:1101px;width:128px">Rubie</div>
<div class="c" style="left:1229px;width:85px;padding-left:10px">Nancy Zorian</div>
<div class="c" style="left:1314px;width:148px">blake.deckow@rolfson.com</div>
<div class="c" style="left:1462px;width:100px;padding-left:10px">(258) 741-2369</div>
<div class="c" style="left:1562px;width:68px;padding-left:10px">1765</div>
<div class="c" style="left:1630px;width:68px">CATERING</div>
</div>
<div class="row rw" style="top:546px;height:27px">
<div class="c" style="left:0px;width:24px"><span class="plus" style="top:10px"></span></div>
<div class="c" style="left:24px;width:32px"><span class="cb" style="top:8px"></span></div>
<div class="c" style="left:56px;width:47px"><span class="eb" style="top:3px"><svg width="14" height="14" viewBox="0 0 14 14"><g transform="translate(7,7) rotate(-45)"><path d="M-7.2 0L-5 -1.5H4.3V1.5H-5Z" fill="none" stroke="#222" stroke-width="1.05" stroke-linejoin="round"/><rect x="4.3" y="-1.9" width="2.9" height="3.8" rx="0.6" fill="#222"/></g></svg></span></div>
<div class="c" style="left:103px;width:54px">Default</div>
<div class="c" style="left:157px;width:75px;padding-left:10px">1520</div>
<div class="c" style="left:232px;width:65px;padding-left:10px">C</div>
<div class="c" style="left:297px;width:88px;padding-left:10px">3/30/2026</div>
<div class="c" style="left:385px;width:167px">Innovate IQ</div>
<div class="c" style="left:552px;width:174px">CONFIRMED - DEPOSIT PEND.</div>
<div class="c" style="left:726px;width:58px">7:30 AM</div>
<div class="c" style="left:784px;width:176px">ALL</div>
<div class="c" style="left:960px;width:63px">5:30 PM</div>
<div class="c" style="left:1023px;width:78px">0</div>
<div class="c" style="left:1101px;width:128px">Quantum Systems LLC</div>
<div class="c" style="left:1229px;width:85px;padding-left:10px">Krissia Castro</div>
<div class="c" style="left:1314px;width:148px">koston@cikume.com</div>
<div class="c" style="left:1462px;width:100px;padding-left:10px">(456) 657-7777</div>
<div class="c" style="left:1562px;width:68px;padding-left:10px">1886</div>
<div class="c" style="left:1630px;width:68px">CATERING</div>
</div>
<div class="row rw" style="top:573px;height:27px">
<div class="c" style="left:0px;width:24px"><span class="plus" style="top:10px"></span></div>
<div class="c" style="left:24px;width:32px"><span class="cb" style="top:8px"></span></div>
<div class="c" style="left:56px;width:47px"><span class="eb" style="top:3px"><svg width="14" height="14" viewBox="0 0 14 14"><g transform="translate(7,7) rotate(-45)"><path d="M-7.2 0L-5 -1.5H4.3V1.5H-5Z" fill="none" stroke="#222" stroke-width="1.05" stroke-linejoin="round"/><rect x="4.3" y="-1.9" width="2.9" height="3.8" rx="0.6" fill="#222"/></g></svg></span></div>
<div class="c" style="left:103px;width:54px">Default</div>
<div class="c" style="left:157px;width:75px;padding-left:10px">1521</div>
<div class="c" style="left:232px;width:65px;padding-left:10px">C</div>
<div class="c" style="left:297px;width:88px;padding-left:10px">3/30/2026</div>
<div class="c" style="left:385px;width:167px">North Pole Party and Gathering</div>
<div class="c" style="left:552px;width:174px">CONFIRMED - DEPOSIT PEND.</div>
<div class="c" style="left:726px;width:58px">7:15 PM</div>
<div class="c" style="left:784px;width:176px">ALL</div>
<div class="c" style="left:960px;width:63px">8:15 PM</div>
<div class="c" style="left:1023px;width:78px">0</div>
<div class="c" style="left:1101px;width:128px">Cikume LLC.,</div>
<div class="c" style="left:1229px;width:85px;padding-left:10px">Josue Alejo</div>
<div class="c" style="left:1314px;width:148px">jalejo@elecate.com</div>
<div class="c" style="left:1462px;width:100px;padding-left:10px"></div>
<div class="c" style="left:1562px;width:68px;padding-left:10px">1812</div>
<div class="c" style="left:1630px;width:68px">CATERING</div>
</div>
<div class="row rw" style="top:600px;height:28px">
<div class="c" style="left:0px;width:24px"><span class="plus" style="top:10px"></span></div>
<div class="c" style="left:24px;width:32px"><span class="cb" style="top:8px"></span></div>
<div class="c" style="left:56px;width:47px"><span class="eb" style="top:3px"><svg width="14" height="14" viewBox="0 0 14 14"><g transform="translate(7,7) rotate(-45)"><path d="M-7.2 0L-5 -1.5H4.3V1.5H-5Z" fill="none" stroke="#222" stroke-width="1.05" stroke-linejoin="round"/><rect x="4.3" y="-1.9" width="2.9" height="3.8" rx="0.6" fill="#222"/></g></svg></span></div>
<div class="c" style="left:103px;width:54px">Default</div>
<div class="c" style="left:157px;width:75px;padding-left:10px">1532</div>
<div class="c" style="left:232px;width:65px;padding-left:10px">C</div>
<div class="c" style="left:297px;width:88px;padding-left:10px">2/27/2026</div>
<div class="c" style="left:385px;width:167px">Test Multi Payment 9</div>
<div class="c" style="left:552px;width:174px">CONFIRMED / BOOKED</div>
<div class="c" style="left:726px;width:58px">3:45 AM</div>
<div class="c" style="left:784px;width:176px">AIRPORT DROP OFF</div>
<div class="c" style="left:960px;width:63px">7:30 PM</div>
<div class="c" style="left:1023px;width:78px">0</div>
<div class="c" style="left:1101px;width:128px">EZ Payment Test 1</div>
<div class="c" style="left:1229px;width:85px;padding-left:10px">Elias Zap</div>
<div class="c" style="left:1314px;width:148px">test@testa.com</div>
<div class="c" style="left:1462px;width:100px;padding-left:10px"></div>
<div class="c" style="left:1562px;width:68px;padding-left:10px">1888</div>
<div class="c" style="left:1630px;width:68px">CATERING</div>
</div>
<div class="row ry" style="top:628px;height:27px">
<div class="c" style="left:0px;width:24px"><span class="plus" style="top:9px"></span></div>
<div class="c" style="left:24px;width:32px"><span class="cb" style="top:7px"></span></div>
<div class="c" style="left:56px;width:47px"><span class="eb" style="top:2px"><svg width="14" height="14" viewBox="0 0 14 14"><g transform="translate(7,7) rotate(-45)"><path d="M-7.2 0L-5 -1.5H4.3V1.5H-5Z" fill="none" stroke="#222" stroke-width="1.05" stroke-linejoin="round"/><rect x="4.3" y="-1.9" width="2.9" height="3.8" rx="0.6" fill="#222"/></g></svg></span></div>
<div class="c" style="left:103px;width:54px;top:-1px">Default</div>
<div class="c" style="left:157px;width:75px;top:-1px;padding-left:10px">1545</div>
<div class="c" style="left:232px;width:65px;top:-1px;padding-left:10px">P</div>
<div class="c" style="left:297px;width:88px;top:-1px;padding-left:10px">3/13/2026</div>
<div class="c" style="left:385px;width:167px;top:-1px">Elecate Staffing Overview 1</div>
<div class="c" style="left:552px;width:174px;top:-1px">PENDING / QUOTED</div>
<div class="c" style="left:726px;width:58px;top:-1px">8:00 AM</div>
<div class="c" style="left:784px;width:176px;top:-1px">ALL</div>
<div class="c" style="left:960px;width:63px;top:-1px">8:30 PM</div>
<div class="c" style="left:1023px;width:78px;top:-1px">0</div>
<div class="c" style="left:1101px;width:128px;top:-1px">EZ Payment Test 2</div>
<div class="c" style="left:1229px;width:85px;top:-1px;padding-left:10px">Saile Paz</div>
<div class="c" style="left:1314px;width:148px;top:-1px">teasd@teast.com</div>
<div class="c" style="left:1462px;width:100px;top:-1px;padding-left:10px"></div>
<div class="c" style="left:1562px;width:68px;top:-1px;padding-left:10px">1889</div>
<div class="c" style="left:1630px;width:68px;top:-1px">CATERING</div>
</div>
<div class="row ry" style="top:655px;height:27px">
<div class="c" style="left:0px;width:24px"><span class="plus" style="top:9px"></span></div>
<div class="c" style="left:24px;width:32px"><span class="cb" style="top:7px"></span></div>
<div class="c" style="left:56px;width:47px"><span class="eb" style="top:2px"><svg width="14" height="14" viewBox="0 0 14 14"><g transform="translate(7,7) rotate(-45)"><path d="M-7.2 0L-5 -1.5H4.3V1.5H-5Z" fill="none" stroke="#222" stroke-width="1.05" stroke-linejoin="round"/><rect x="4.3" y="-1.9" width="2.9" height="3.8" rx="0.6" fill="#222"/></g></svg></span></div>
<div class="c" style="left:103px;width:54px;top:-1px">Default</div>
<div class="c" style="left:157px;width:75px;top:-1px;padding-left:10px">1544</div>
<div class="c" style="left:232px;width:65px;top:-1px;padding-left:10px">P</div>
<div class="c" style="left:297px;width:88px;top:-1px;padding-left:10px">3/13/2026</div>
<div class="c" style="left:385px;width:167px;top:-1px">Elecate Staffing Overview</div>
<div class="c" style="left:552px;width:174px;top:-1px">PENDING / QUOTED</div>
<div class="c" style="left:726px;width:58px;top:-1px">8:00 AM</div>
<div class="c" style="left:784px;width:176px;top:-1px">ALL</div>
<div class="c" style="left:960px;width:63px;top:-1px">8:30 PM</div>
<div class="c" style="left:1023px;width:78px;top:-1px">0</div>
<div class="c" style="left:1101px;width:128px;top:-1px">EZ Payment Test 2</div>
<div class="c" style="left:1229px;width:85px;top:-1px;padding-left:10px">Saile Paz</div>
<div class="c" style="left:1314px;width:148px;top:-1px">teasd@teast.com</div>
<div class="c" style="left:1462px;width:100px;top:-1px;padding-left:10px"></div>
<div class="c" style="left:1562px;width:68px;top:-1px;padding-left:10px">1889</div>
<div class="c" style="left:1630px;width:68px;top:-1px">CATERING</div>
</div>
<div class="row rw" style="top:682px;height:27px">
<div class="c" style="left:0px;width:24px"><span class="plus" style="top:9px"></span></div>
<div class="c" style="left:24px;width:32px"><span class="cb" style="top:7px"></span></div>
<div class="c" style="left:56px;width:47px"><span class="eb" style="top:2px"><svg width="14" height="14" viewBox="0 0 14 14"><g transform="translate(7,7) rotate(-45)"><path d="M-7.2 0L-5 -1.5H4.3V1.5H-5Z" fill="none" stroke="#222" stroke-width="1.05" stroke-linejoin="round"/><rect x="4.3" y="-1.9" width="2.9" height="3.8" rx="0.6" fill="#222"/></g></svg></span></div>
<div class="c" style="left:103px;width:54px;top:-1px">Default</div>
<div class="c" style="left:157px;width:75px;top:-1px;padding-left:10px">1541</div>
<div class="c" style="left:232px;width:65px;top:-1px;padding-left:10px">C</div>
<div class="c" style="left:297px;width:88px;top:-1px;padding-left:10px">2/16/2026</div>
<div class="c" style="left:385px;width:167px;top:-1px">Test Multi Payment V8</div>
<div class="c" style="left:552px;width:174px;top:-1px">CONFIRMED / BOOKED</div>
<div class="c" style="left:726px;width:58px;top:-1px">3:45 AM</div>
<div class="c" style="left:784px;width:176px;top:-1px">AIRPORT DROP OFF</div>
<div class="c" style="left:960px;width:63px;top:-1px">7:30 PM</div>
<div class="c" style="left:1023px;width:78px;top:-1px">0</div>
<div class="c" style="left:1101px;width:128px;top:-1px">EZ Payment Test 2</div>
<div class="c" style="left:1229px;width:85px;top:-1px;padding-left:10px">Saile Paz</div>
<div class="c" style="left:1314px;width:148px;top:-1px">teasd@teast.com</div>
<div class="c" style="left:1462px;width:100px;top:-1px;padding-left:10px"></div>
<div class="c" style="left:1562px;width:68px;top:-1px;padding-left:10px">1889</div>
<div class="c" style="left:1630px;width:68px;top:-1px">CATERING</div>
</div>
<div class="row rw" style="top:709px;height:27px">
<div class="c" style="left:0px;width:24px"><span class="plus" style="top:9px"></span></div>
<div class="c" style="left:24px;width:32px"><span class="cb" style="top:7px"></span></div>
<div class="c" style="left:56px;width:47px"><span class="eb" style="top:2px"><svg width="14" height="14" viewBox="0 0 14 14"><g transform="translate(7,7) rotate(-45)"><path d="M-7.2 0L-5 -1.5H4.3V1.5H-5Z" fill="none" stroke="#222" stroke-width="1.05" stroke-linejoin="round"/><rect x="4.3" y="-1.9" width="2.9" height="3.8" rx="0.6" fill="#222"/></g></svg></span></div>
<div class="c" style="left:103px;width:54px;top:-1px">Default</div>
<div class="c" style="left:157px;width:75px;top:-1px;padding-left:10px">1539</div>
<div class="c" style="left:232px;width:65px;top:-1px;padding-left:10px">C</div>
<div class="c" style="left:297px;width:88px;top:-1px;padding-left:10px">2/18/2026</div>
<div class="c" style="left:385px;width:167px;top:-1px">Test Multi Payment V6</div>
<div class="c" style="left:552px;width:174px;top:-1px">CONFIRMED / BOOKED</div>
<div class="c" style="left:726px;width:58px;top:-1px">3:45 AM</div>
<div class="c" style="left:784px;width:176px;top:-1px">AIRPORT DROP OFF</div>
<div class="c" style="left:960px;width:63px;top:-1px">7:30 PM</div>
<div class="c" style="left:1023px;width:78px;top:-1px">0</div>
<div class="c" style="left:1101px;width:128px;top:-1px">EZ Payment Test 2</div>
<div class="c" style="left:1229px;width:85px;top:-1px;padding-left:10px">Saile Paz</div>
<div class="c" style="left:1314px;width:148px;top:-1px">teasd@teast.com</div>
<div class="c" style="left:1462px;width:100px;top:-1px;padding-left:10px"></div>
<div class="c" style="left:1562px;width:68px;top:-1px;padding-left:10px">1889</div>
<div class="c" style="left:1630px;width:68px;top:-1px">CATERING</div>
</div>
<div class="vl" style="left:217px"></div>
<div class="vl" style="left:249px"></div>
<div class="vl" style="left:296px"></div>
<div class="vl" style="left:350px"></div>
<div class="vl" style="left:425px"></div>
<div class="vl" style="left:490px"></div>
<div class="vl" style="left:578px"></div>
<div class="vl" style="left:745px"></div>
<div class="vl" style="left:919px"></div>
<div class="vl" style="left:977px"></div>
<div class="vl" style="left:1153px"></div>
<div class="vl" style="left:1216px"></div>
<div class="vl" style="left:1294px"></div>
<div class="vl" style="left:1422px"></div>
<div class="vl" style="left:1507px"></div>
<div class="vl" style="left:1655px"></div>
<div class="vl" style="left:1755px"></div>
<div class="vl" style="left:1823px"></div>

<!-- white empty area -->
<div class="abs" style="left:193px;top:735px;width:1698px;height:47px;background:#fff"></div>
<!-- vertical scrollbar -->
<div class="abs" style="left:1891px;top:248px;width:15px;height:534px;background:#fcfcfc"></div>
<svg class="abs" style="left:1894.3px;top:254px" width="8.4" height="6" viewBox="0 0 8.4 6"><path d="M0 6L4.2 0L8.4 6Z" fill="#8a8a8a"/></svg>
<svg class="abs" style="left:1894.5px;top:770px" width="8.2" height="6" viewBox="0 0 8.2 6"><path d="M0 0H8.2L4.1 6Z" fill="#8a8a8a"/></svg>
<!-- horizontal scrollbar -->
<div class="abs" style="left:193px;top:782px;width:1713px;height:15px;background:#fcfcfc"></div>
<svg class="abs" style="left:199px;top:785px" width="6" height="9" viewBox="0 0 6 9"><path d="M6 0V9L0 4.5Z" fill="#8a8a8a"/></svg>
<div class="abs" style="left:211px;top:785px;width:908px;height:9px;background:#8a8a8a;border-radius:5px"></div>
<svg class="abs" style="left:1879px;top:785px" width="6" height="9" viewBox="0 0 6 9"><path d="M0 0V9L6 4.5Z" fill="#8a8a8a"/></svg>

<!-- pager -->
<svg class="abs" style="left:207px;top:812px" width="6.2" height="6.2" viewBox="0 0 6.2 6.2"><rect x="0" y="0" width="1.3" height="6.2" fill="#999"/><path d="M6.2 0V6.2L1.3 3.1Z" fill="#999"/></svg>
<svg class="abs" style="left:231.4px;top:812px" width="4.8" height="6.2" viewBox="0 0 4.8 6.2"><path d="M4.8 0V6.2L0 3.1Z" fill="#999"/></svg>
<div class="abs" style="left:245px;top:804px;width:22px;height:23px;background:#fcdede"></div>
<div class="lbl" style="left:253px;top:808px;color:#f44;font-size:11px">1</div>
<div class="lbl" style="left:275px;top:808px;color:#f44;font-size:11px">2</div>
<div class="lbl" style="left:297px;top:808px;color:#f44;font-size:11px">3</div>
<svg class="abs" style="left:320.9px;top:812px" width="4.8" height="6.2" viewBox="0 0 4.8 6.2"><path d="M0 0V6.2L4.8 3.1Z" fill="#222"/></svg>
<svg class="abs" style="left:343px;top:812px" width="6.2" height="6.2" viewBox="0 0 6.2 6.2"><path d="M0 0V6.2L4.9 3.1Z" fill="#222"/><rect x="4.9" y="0" width="1.3" height="6.2" fill="#222"/></svg>
<div class="lbl" style="left:1817.5px;top:808px;color:#333;letter-spacing:-0.2px">1 - 18 of 50 items</div>

<!-- floating taskbar widget -->
<div class="abs" style="left:1583px;top:863px;width:210px;height:50px;background:#f7f7f7;border:1px solid #e6e6e6;border-radius:9px"></div>
<div class="abs" style="left:1589px;top:869px;width:39px;height:39px;background:#fbfbfb;border:1px solid #eeeeee;border-radius:4px"></div>
<svg class="abs" style="left:1599px;top:879px" width="18" height="18" viewBox="0 0 18 18"><circle cx="9" cy="9" r="8.5" fill="#8d1bb5"/><path d="M5 13C3.5 10 5 7 6.5 5.5C6.5 7.5 7.5 8 8 8C8 6 9.5 4 11.5 3.5C11 5.5 12.5 6.5 13 8C13.8 10.5 12.5 13 10 13.8Z" fill="#ff8a00"/><path d="M6.5 13C6 11 7.5 10 8.5 9.5C8.5 11 10 11.5 10.5 12.5C10.5 13.5 9 14 8 13.8Z" fill="#ff3d5a"/></svg>
<svg class="abs" style="left:1639px;top:879px" width="19" height="18" viewBox="0 0 19 18"><path d="M3 14L6 3C6.5 1.5 7.5 1 9 1H13L10 12C9.5 13.5 8.5 14 7 14Z" fill="#1fa8e8"/><path d="M9 4H15C16.5 4 17.5 5 17 6.5L15 13C14.5 14.5 13.5 15 12 15H6Z" fill="#c65bd8"/><path d="M1 9L3 5H9L7 12H3C1.5 12 0.5 10.5 1 9Z" fill="#36c17a"/><rect x="7" y="11" width="12" height="7" fill="#111"/><text x="13" y="17" font-size="5" fill="#fff" text-anchor="middle" font-family="Liberation Sans">PDF</text></svg>
<svg class="abs" style="left:1678px;top:879px" width="19" height="18" viewBox="0 0 19 18"><circle cx="6" cy="2.5" r="2.2" fill="#7b83eb"/><circle cx="12.5" cy="4" r="1.8" fill="#9ea4f2"/><path d="M2 6H10V14C10 16 8 17 6 17C3.5 17 2 15.5 2 13.5Z" fill="#5059c9"/><text x="6" y="13" font-size="7" font-weight="bold" fill="#fff" text-anchor="middle" font-family="Liberation Sans">T</text><circle cx="13.5" cy="12.5" r="5" fill="#2ea043"/><path d="M11.2 12.5L13 14.3L16 11" fill="none" stroke="#fff" stroke-width="1.4"/></svg>
<svg class="abs" style="left:1719px;top:880px" width="17" height="16" viewBox="0 0 17 16"><rect x="0.5" y="0.5" width="16" height="15" fill="#f2f2f2" stroke="#aaa"/><g stroke="#444" stroke-width="1.1"><line x1="3" y1="4" x2="14" y2="4"/><line x1="3" y1="8" x2="14" y2="8"/><line x1="3" y1="12" x2="14" y2="12"/></g><g fill="#f2f2f2" stroke="#444" stroke-width="0.9"><circle cx="11" cy="4" r="1.3"/><circle cx="7" cy="8" r="1.3"/><circle cx="5" cy="12" r="1.3"/></g></svg>
<svg class="abs" style="left:1760px;top:879px" width="17" height="18" viewBox="0 0 17 18"><path d="M7 0.5L13 2.5V8C13 12 10.5 14.5 7 16C3.5 14.5 1 12 1 8V2.5Z" fill="#1ea0e0"/><path d="M7 0.5L13 2.5V8C13 10 12.3 11.5 11.3 12.8L7 8Z" fill="#75d1f5"/><path d="M11.5 9L17 18H6Z" fill="#f5c400"/><rect x="11" y="12" width="1.3" height="3" fill="#111"/><rect x="11" y="15.7" width="1.3" height="1.2" fill="#111"/></svg>

</body></html>
